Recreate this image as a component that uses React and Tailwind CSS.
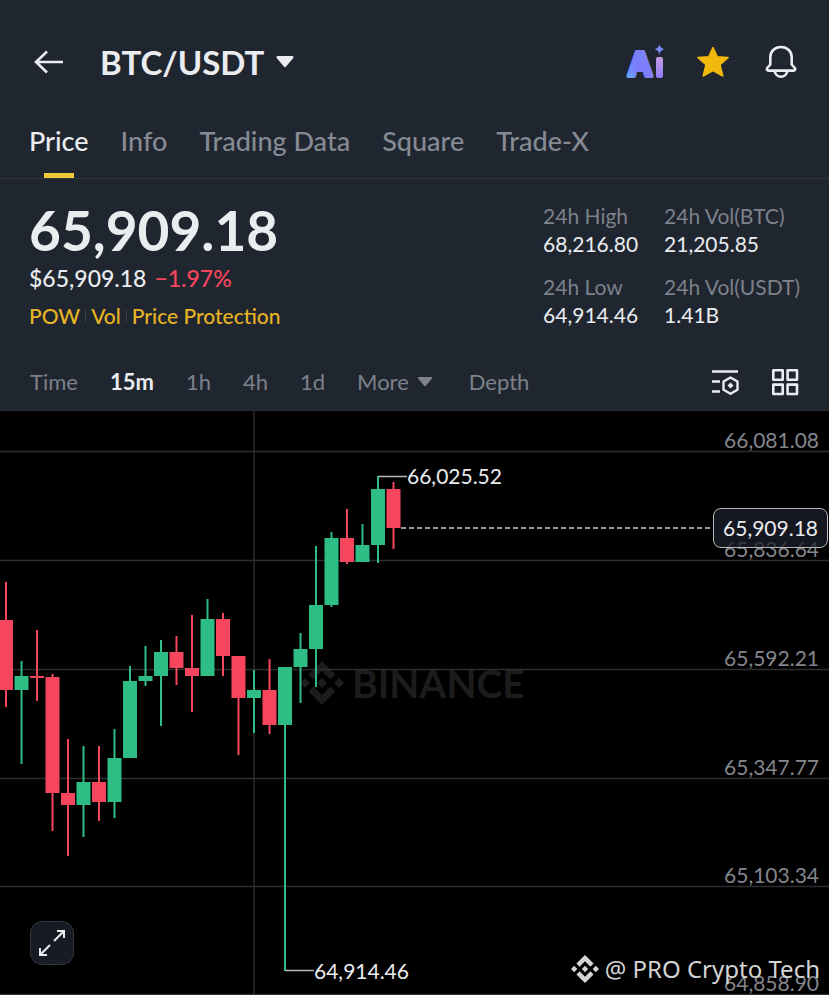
const TABS = ['Price', 'Info', 'Trading Data', 'Square', 'Trade-X'];
const INTERVALS = ['Time', '15m', '1h', '4h', '1d'];

const STATS = [
  { label: '24h High', value: '68,216.80' },
  { label: '24h Vol(BTC)', value: '21,205.85' },
  { label: '24h Low', value: '64,914.46' },
  { label: '24h Vol(USDT)', value: '1.41B' },
];

const AXIS = [
  { y: 40, label: '66,081.08' },
  { y: 149, label: '65,836.64' },
  { y: 258, label: '65,592.21' },
  { y: 367, label: '65,347.77' },
  { y: 475, label: '65,103.34' },
  { y: 583, label: '64,858.90' },
];

// [up, wick top, body top, body bottom, wick bottom]
const CANDLES = [
  [false, 171, 209, 279, 296],
  [true, 250, 265, 279, 353],
  [false, 219, 265, 267, 290],
  [false, 263, 266, 382, 420],
  [false, 328, 382, 394, 445],
  [true, 335, 371, 394, 426],
  [false, 335, 371, 391, 410],
  [true, 318, 347, 391, 407],
  [true, 255, 270, 347, 347],
  [true, 235, 265, 270, 275],
  [true, 229, 241, 265, 315],
  [false, 225, 241, 257, 274],
  [false, 204, 257, 265, 301],
  [true, 188, 208, 265, 265],
  [false, 202, 208, 245, 265],
  [false, 245, 245, 287, 344],
  [true, 259, 279, 287, 322],
  [false, 248, 279, 314, 323],
  [true, 256, 256, 314, 560],
  [true, 222, 238, 256, 292],
  [true, 135, 194, 238, 276],
  [true, 121, 127, 194, 196],
  [false, 98, 127, 151, 153],
  [true, 113, 134, 151, 151],
  [true, 65, 78, 134, 152],
  [false, 71, 78, 117, 138],
];

const candleX = (i) => 6 + i * 15.5;

const BinanceMark = ({ className }) => (
  <svg viewBox="0 0 24 24" fill="currentColor" className={className} aria-hidden="true">
    <path d="M16.624 13.92l2.717 2.716-7.353 7.353-7.353-7.352 2.717-2.717 4.636 4.66zM21.27 9.284L24 12l-2.715 2.716-2.716-2.716zM11.988 9.284l2.716 2.717-2.716 2.716L9.272 12zM2.717 9.284L5.433 12l-2.716 2.716L0 12zM11.988 0l7.353 7.353-2.717 2.716-4.636-4.636-4.636 4.636-2.717-2.716z" />
  </svg>
);

const Caret = ({ className }) => (
  <svg viewBox="0 0 18 12" fill="currentColor" className={className} aria-hidden="true">
    <path d="M1.6 0h14.8c1 0 1.5 1.1.9 1.9l-7.2 8.7c-.6.8-1.600.8-2.200 0L.7 1.900C.1 1.100.6 0 1.600 0z" />
  </svg>
);

const AiIcon = () => (
  <svg viewBox="0 0 40 36" className="w-10 h-9 overflow-visible" aria-hidden="true">
    <defs>
      <linearGradient id="ai-a" x1="0" y1="1" x2="0.8" y2="0">
        <stop offset="0" stopColor="#5fb4f5" />
        <stop offset="0.4" stopColor="#7b7cfa" />
        <stop offset="1" stopColor="#7d86fb" />
      </linearGradient>
      <linearGradient id="ai-i" x1="0" y1="0" x2="0" y2="1">
        <stop offset="0" stopColor="#c79be6" />
        <stop offset="1" stopColor="#8f7cf8" />
      </linearGradient>
    </defs>
    <text
      x="15"
      y="32"
      textAnchor="middle"
      fontFamily="Inter, sans-serif"
      fontWeight="700"
      fontSize="33"
      fill="url(#ai-a)"
      stroke="url(#ai-a)"
      strokeWidth="4"
      strokeLinejoin="round"
    >
      A
    </text>
    <rect x="31" y="13" width="7" height="21" rx="2" fill="url(#ai-i)" />
    <path d="M34.500 0c.8 3.400 1.800 4.400 5.200 5.300-3.400.9-4.400 1.900-5.200 5.300-.8-3.400-1.800-4.400-5.200-5.300 3.400-.9 4.400-1.900 5.200-5.300z" fill="#7b8cff" />
  </svg>
);

const Header = () => (
  <header className="flex items-center justify-between px-8 pt-10">
    <div className="flex items-center gap-9">
      <button type="button" aria-label="Back">
        <svg viewBox="0 0 32 24" className="w-8 h-6" fill="none" stroke="currentColor" strokeWidth="2.600">
          <path d="M31 12H4M15 1.500L4 12l11 10.500" />
        </svg>
      </button>
      <button type="button" className="flex items-center gap-3 text-[33px] leading-11 font-bold">
        BTC/USDT
        <Caret className="w-[18px] h-3" />
      </button>
    </div>
    <div className="flex items-center gap-8">
      <button type="button" aria-label="Ai">
        <AiIcon />
      </button>
      <button type="button" aria-label="Favourite">
        <svg viewBox="0 0 32 32" className="w-8 h-8" fill="#f0b90b" stroke="#f0b90b" strokeWidth="1.500" strokeLinejoin="round">
          <path d="M16 1.500l4.300 9.300 10.700.8-8 7 2.800 11.400L16 24.500 6.200 30 9 18.600l-8-7 10.700-.8z" />
        </svg>
      </button>
      <button type="button" aria-label="Alerts" className="pl-1">
        <svg viewBox="0 0 32 34" className="w-8 h-[34px]" fill="none" stroke="currentColor" strokeWidth="2.600" strokeLinejoin="round">
          <path d="M16 2C9.500 2 5.300 6.500 5.300 12.500v7L2.200 23c-.8 1.200-.2 2.600 1.200 2.600h25.200c1.400 0 2-1.400 1.200-2.600l-3.100-3.500v-7C26.700 6.500 22.500 2 16 2z" />
          <path d="M9.500 26c1 3.600 3.400 5.800 6.500 5.800s5.500-2.200 6.500-5.800" />
        </svg>
      </button>
    </div>
  </header>
);

const Tabs = () => (
  <nav className="flex gap-8 px-[29px] mt-[33px] border-b border-[#30353e] text-[27px] leading-8">
    {TABS.map((tab, i) => (
      <a
        key={tab}
        href="#"
        className={`flex flex-col items-center gap-4 pt-2 font-medium ${i === 0 ? 'text-[#eaecef]' : 'text-[#858a94]'}`}
      >
        {tab}
        <span className={`w-[30px] h-[5px] ${i === 0 ? 'bg-[#f0c93a]' : ''}`} />
      </a>
    ))}
  </nav>
);

const Summary = () => (
  <section className="flex justify-between px-[29px] pt-[23px]">
    <div>
      <h1 className="text-[55px] leading-14 font-bold">65,909.18</h1>
      <p className="flex gap-2 mt-1 text-[23px] leading-8 font-medium">
        <span>$65,909.18</span>
        <span className="text-[#f6465d]">−1.97%</span>
      </p>
      <p className="flex items-center gap-[5px] mt-2 text-[21px] leading-7 font-medium text-[#e8b424]">
        <a href="#">POW</a>
        <span className="w-px h-3 bg-[#3a404b]" />
        <a href="#">Vol</a>
        <span className="w-px h-3 bg-[#3a404b]" />
        <a href="#">Price Protection</a>
      </p>
    </div>
    <dl className="grid grid-cols-[auto_auto] gap-x-[26px] gap-y-[14px] text-[21px] leading-7">
      {STATS.map((stat) => (
        <div key={stat.label}>
          <dt className="text-[#7c818b]">{stat.label}</dt>
          <dd>{stat.value}</dd>
        </div>
      ))}
    </dl>
  </section>
);

const IntervalBar = () => (
  <div className="flex items-center justify-between px-[30px] py-3 mt-6 text-[22px] leading-8 text-[#7c818b]">
    <div className="flex gap-8">
      {INTERVALS.map((name) => (
        <button key={name} type="button" className={name === '15m' ? 'font-bold text-[#eaecef]' : ''}>
          {name}
        </button>
      ))}
      <button type="button" className="flex items-center gap-2">
        More
        <Caret className="w-4 h-[10px]" />
      </button>
      <button type="button" className="ml-1">Depth</button>
    </div>
    <div className="flex gap-8 text-[#eaecef]">
      <button type="button" aria-label="Indicator settings">
        <svg viewBox="0 0 28 28" className="w-7 h-7" fill="none" stroke="currentColor" strokeWidth="2.400">
          <path d="M1 3.500h26M1 13.500h8M1 23.500h8" />
          <path d="M19.500 9.500l7 4v8.200l-7 4-7-4v-8.200z" strokeLinejoin="round" />
          <path d="M19.500 14.500l3 3-3 3-3-3z" fill="currentColor" stroke="none" />
        </svg>
      </button>
      <button type="button" aria-label="Chart layout">
        <svg viewBox="0 0 28 28" className="w-7 h-7" fill="none" stroke="currentColor" strokeWidth="2.600" strokeLinejoin="round">
          <rect x="2.300" y="2.300" width="9.400" height="9.400" />
          <rect x="16.600" y="2.300" width="9.400" height="9.400" />
          <rect x="2.300" y="16.600" width="9.400" height="9.400" />
          <rect x="16.600" y="16.600" width="9.400" height="9.400" />
        </svg>
      </button>
    </div>
  </div>
);

const Chart = () => (
  <section className="relative flex-1 overflow-hidden bg-black border-t border-[#292b2f]">
    <div className="absolute left-[300px] top-[250px] flex items-center gap-2 text-[#1c1c1c]">
      <BinanceMark className="w-11 h-11" />
      <span className="text-[39px] leading-11 font-bold">BINANCE</span>
    </div>
    <svg className="relative block w-full h-[584px]" role="img" aria-label="BTC/USDT 15 minute candles">
      <g stroke="#2c2d30" strokeWidth="1.500">
        {AXIS.map((tick) => (
          <line key={tick.label} x1="0" x2="100%" y1={tick.y + 0.5} y2={tick.y + 0.5} />
        ))}
        <line x1="254" x2="254" y1="0" y2="100%" />
      </g>
      {CANDLES.map(([up, high, top, bottom, low], i) => (
        <g key={i} fill={up ? '#2ebd85' : '#f6465d'}>
          <rect x={candleX(i) - 1} y={high} width="2" height={low - high} />
          <rect x={candleX(i) - 7} y={top} width="14" height={bottom - top} />
        </g>
      ))}
      <path d="M378 65.500h29M285 559.500h29" stroke="#b7b9bd" strokeWidth="1.500" />
      <g fill="#eaecef" fontSize="21">
        <text x="407" y="73">66,025.52</text>
        <text x="314" y="568">64,914.46</text>
      </g>
    </svg>

    <ul className="absolute inset-0 text-[21px] leading-6 text-[#83868c]">
      {AXIS.map((tick) => (
        <li key={tick.label} className="absolute right-[10px]" style={{ top: tick.y - 23 }}>
          {tick.label}
        </li>
      ))}
    </ul>

    {/* last price line and tag */}
    <div className="absolute left-[401px] right-px top-[97px] flex items-center">
      <svg className="flex-1 h-[2px]" aria-hidden="true">
        <line x1="0" x2="100%" y1="1" y2="1" stroke="#c8c9cc" strokeWidth="1.500" strokeDasharray="5 3" />
      </svg>
      <span className="px-[9px] py-[3px] rounded-lg border border-[#b7b9bd] bg-[#1b1f29]/75 text-[21px] leading-8">
        65,909.18
      </span>
    </div>

    <button
      type="button"
      aria-label="Full screen"
      className="absolute left-[30px] top-[510px] flex items-center justify-center w-11 h-11 rounded-xl border border-[#33373e] bg-[#171b23]"
    >
      <svg viewBox="0 0 28 28" className="w-7 h-7" fill="none" stroke="currentColor" strokeWidth="2">
        <path d="M16 12L26 2M19 2h7v7M12 16L2 26M2 19v7h7" />
      </svg>
    </button>
    <p className="absolute right-[9px] top-[542px] flex items-center gap-[6px] font-['Noto_Sans',sans-serif] text-2xl leading-8 text-[#d4d4d4]">
      <BinanceMark className="w-7 h-7" />
      @ PRO Crypto Tech
    </p>
  </section>
);

export default function App() {
  return (
    <main className="flex flex-col min-h-screen bg-[#20262f] text-[#eaecef] font-['Lato',sans-serif]">
      <Header />
      <Tabs />
      <Summary />
      <IntervalBar />
      <Chart />
    </main>
  );
}
